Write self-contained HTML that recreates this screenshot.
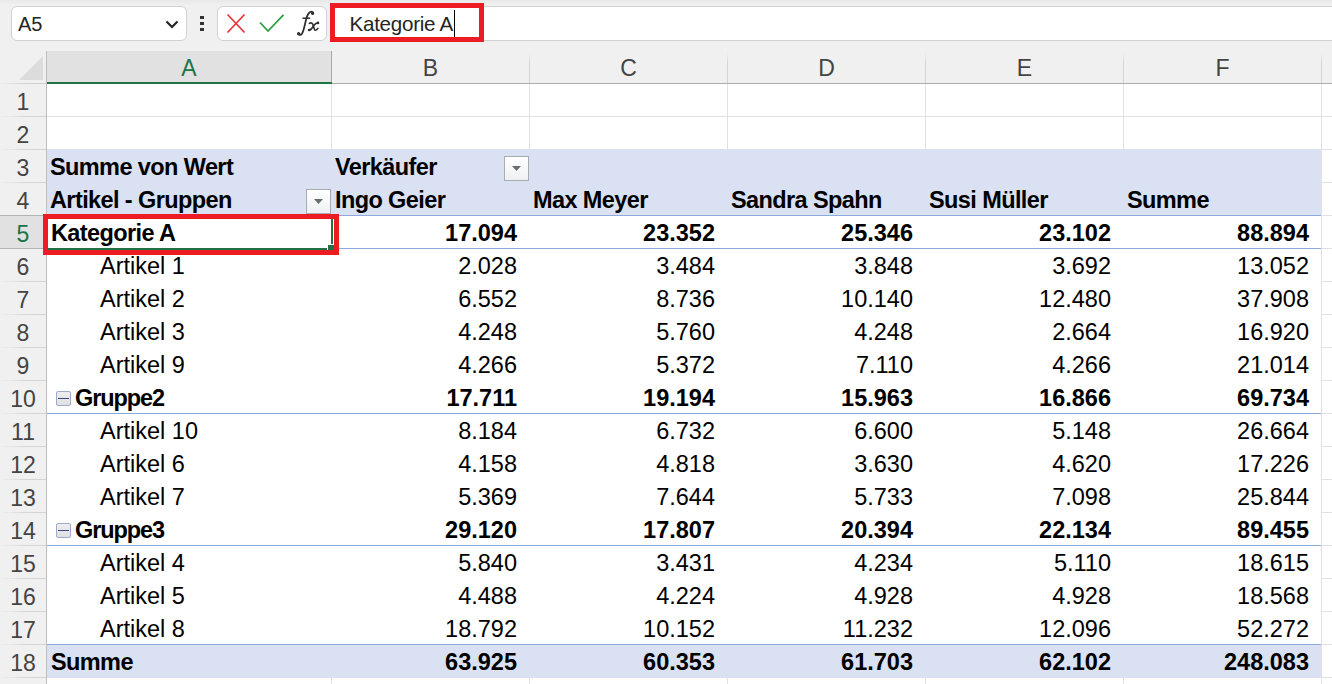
<!DOCTYPE html>
<html><head><meta charset="utf-8"><style>
html,body{margin:0;padding:0;}
body{width:1332px;height:684px;position:relative;overflow:hidden;background:linear-gradient(#e9e9e9,#f0f0f0 5px) #f0f0f0;font-family:"Liberation Sans", sans-serif;}
.t{position:absolute;white-space:nowrap;font-size:22px;line-height:22px;color:#000;}
</style></head><body>
<div id="nb" style="position:absolute;left:11px;top:6px;width:174px;height:33px;border:1px solid #d1d1d1;border-radius:6px;background:#fff"></div>
<div class="t" style="left:18px;top:14px;font-size:20px;line-height:20px;color:#242424">A5</div>
<svg style="position:absolute;left:164px;top:18px" width="16" height="12"><polyline points="2.5,3.5 8,9 13.5,3.5" fill="none" stroke="#242424" stroke-width="2.2"/></svg>
<div style="position:absolute;left:200.3px;top:16px;width:3.6px;height:3px;background:#333"></div>
<div style="position:absolute;left:200.3px;top:22px;width:3.6px;height:3px;background:#333"></div>
<div style="position:absolute;left:200.3px;top:28px;width:3.6px;height:3px;background:#333"></div>
<div style="position:absolute;left:217px;top:6px;width:108px;height:33px;border:1px solid #d1d1d1;border-radius:6px;background:#fff"></div>
<svg style="position:absolute;left:220px;top:8px" width="100" height="32"><path d="M7.5 6.5 L24.5 24.5 M24.5 6.5 L7.5 24.5" stroke="#e8373f" stroke-width="1.8" fill="none"/><polyline points="40,14.5 48,23 63.5,6.8" stroke="#2ea043" stroke-width="1.8" fill="none"/></svg>
<svg style="position:absolute;left:290px;top:5px" width="36" height="36"><path d="M8.4 28.8 C9.2 30.3 10.8 30.2 12 28.6 C13.4 26.6 14.6 21 15.6 16.5 C16.6 11.8 18.2 6.8 21.4 6.6 C22.6 6.6 23.2 7.4 23.1 8.2" fill="none" stroke="#2e2e2e" stroke-width="1.8" stroke-linecap="round"/><circle cx="8.6" cy="28.6" r="1.6" fill="#2e2e2e"/><circle cx="22.6" cy="8.5" r="1.6" fill="#2e2e2e"/><path d="M12.5 13.2 L20.2 13.2" stroke="#2e2e2e" stroke-width="1.5"/><path d="M19.4 18.3 C20.8 17.4 22.3 17.8 22.9 19.6 L24.4 24.2 C24.9 25.6 26.2 25.8 27.9 23.4" fill="none" stroke="#2e2e2e" stroke-width="1.6" stroke-linecap="round"/><path d="M28.2 17.9 C26.4 17.6 25 18.6 23.4 21 C21.8 23.6 20.4 25.6 19 25.1" fill="none" stroke="#2e2e2e" stroke-width="1.6" stroke-linecap="round"/><circle cx="28" cy="17.9" r="1.3" fill="#2e2e2e"/><circle cx="19.1" cy="25" r="1.3" fill="#2e2e2e"/></svg>
<div style="position:absolute;left:331px;top:6px;width:1010px;height:33px;border:1px solid #d1d1d1;border-radius:6px 0 0 6px;background:#fff"></div>
<div class="t" style="left:349.5px;top:13.5px;font-size:20.6px;line-height:20.6px;letter-spacing:-0.27px;color:#242424">Kategorie A</div>
<div style="position:absolute;left:454px;top:10px;width:1px;height:27px;background:#000"></div>
<div style="position:absolute;left:330px;top:3px;width:144px;height:29px;border:5px solid #ed1c24"></div>
<svg style="position:absolute;left:0;top:51px" width="46" height="33"><polygon points="43,5 43,29 19,29" fill="#dcdcdc"/></svg>
<div style="position:absolute;left:46px;top:51px;width:1286px;height:32px;background:#f0f0f0"></div>
<div style="position:absolute;left:47px;top:51px;width:284px;height:31px;background:#e1e1e1"></div>
<div style="position:absolute;left:46px;top:83px;width:1286px;height:1px;background:#adadad"></div>
<div style="position:absolute;left:331px;top:51px;width:1px;height:32px;background:#a8a8a8"></div>
<div style="position:absolute;left:47px;top:82px;width:285px;height:2px;background:#217346"></div>
<div style="position:absolute;left:529px;top:52px;width:1px;height:31px;background:linear-gradient(#f0f0f0,#d4d4d4 40%)"></div>
<div style="position:absolute;left:727px;top:52px;width:1px;height:31px;background:linear-gradient(#f0f0f0,#d4d4d4 40%)"></div>
<div style="position:absolute;left:925px;top:52px;width:1px;height:31px;background:linear-gradient(#f0f0f0,#d4d4d4 40%)"></div>
<div style="position:absolute;left:1123px;top:52px;width:1px;height:31px;background:linear-gradient(#f0f0f0,#d4d4d4 40%)"></div>
<div style="position:absolute;left:1321px;top:52px;width:1px;height:31px;background:linear-gradient(#f0f0f0,#d4d4d4 40%)"></div>
<div class="t" style="left:47px;width:284px;top:57.3px;text-align:center;font-size:23px;line-height:23px;color:#217346">A</div>
<div class="t" style="left:332px;width:197px;top:57.3px;text-align:center;font-size:23px;line-height:23px;color:#444">B</div>
<div class="t" style="left:530px;width:197px;top:57.3px;text-align:center;font-size:23px;line-height:23px;color:#444">C</div>
<div class="t" style="left:728px;width:197px;top:57.3px;text-align:center;font-size:23px;line-height:23px;color:#444">D</div>
<div class="t" style="left:926px;width:197px;top:57.3px;text-align:center;font-size:23px;line-height:23px;color:#444">E</div>
<div class="t" style="left:1124px;width:197px;top:57.3px;text-align:center;font-size:23px;line-height:23px;color:#444">F</div>
<div class="t" style="left:1322px;width:198px;top:57.3px;text-align:center;font-size:23px;line-height:23px;color:#444">G</div>
<div style="position:absolute;left:46px;top:51px;width:1px;height:640px;background:#bdbdbd"></div>
<div style="position:absolute;left:0;top:83px;width:46px;height:1px;background:linear-gradient(to right,#f0f0f0,#cfcfcf 60%)"></div>
<div style="position:absolute;left:0;top:116px;width:46px;height:1px;background:linear-gradient(to right,#f0f0f0,#d4d4d4 60%)"></div>
<div class="t" style="left:0;width:46px;top:90.6px;text-align:center;font-size:23px;line-height:23px;color:#444">1</div>
<div style="position:absolute;left:0;top:149px;width:46px;height:1px;background:linear-gradient(to right,#f0f0f0,#d4d4d4 60%)"></div>
<div class="t" style="left:0;width:46px;top:123.6px;text-align:center;font-size:23px;line-height:23px;color:#444">2</div>
<div style="position:absolute;left:0;top:182px;width:46px;height:1px;background:linear-gradient(to right,#f0f0f0,#d4d4d4 60%)"></div>
<div class="t" style="left:0;width:46px;top:156.6px;text-align:center;font-size:23px;line-height:23px;color:#444">3</div>
<div style="position:absolute;left:0;top:215px;width:46px;height:1px;background:linear-gradient(to right,#f0f0f0,#d4d4d4 60%)"></div>
<div class="t" style="left:0;width:46px;top:189.6px;text-align:center;font-size:23px;line-height:23px;color:#444">4</div>
<div style="position:absolute;left:0;top:216px;width:46px;height:32px;background:#e1e1e1"></div>
<div style="position:absolute;left:0;top:248px;width:46px;height:1px;background:linear-gradient(to right,#f0f0f0,#d4d4d4 60%)"></div>
<div class="t" style="left:0;width:46px;top:222.6px;text-align:center;font-size:23px;line-height:23px;color:#217346">5</div>
<div style="position:absolute;left:0;top:281px;width:46px;height:1px;background:linear-gradient(to right,#f0f0f0,#d4d4d4 60%)"></div>
<div class="t" style="left:0;width:46px;top:255.6px;text-align:center;font-size:23px;line-height:23px;color:#444">6</div>
<div style="position:absolute;left:0;top:314px;width:46px;height:1px;background:linear-gradient(to right,#f0f0f0,#d4d4d4 60%)"></div>
<div class="t" style="left:0;width:46px;top:288.6px;text-align:center;font-size:23px;line-height:23px;color:#444">7</div>
<div style="position:absolute;left:0;top:347px;width:46px;height:1px;background:linear-gradient(to right,#f0f0f0,#d4d4d4 60%)"></div>
<div class="t" style="left:0;width:46px;top:321.6px;text-align:center;font-size:23px;line-height:23px;color:#444">8</div>
<div style="position:absolute;left:0;top:380px;width:46px;height:1px;background:linear-gradient(to right,#f0f0f0,#d4d4d4 60%)"></div>
<div class="t" style="left:0;width:46px;top:354.6px;text-align:center;font-size:23px;line-height:23px;color:#444">9</div>
<div style="position:absolute;left:0;top:413px;width:46px;height:1px;background:linear-gradient(to right,#f0f0f0,#d4d4d4 60%)"></div>
<div class="t" style="left:0;width:46px;top:387.6px;text-align:center;font-size:23px;line-height:23px;color:#444">10</div>
<div style="position:absolute;left:0;top:446px;width:46px;height:1px;background:linear-gradient(to right,#f0f0f0,#d4d4d4 60%)"></div>
<div class="t" style="left:0;width:46px;top:420.6px;text-align:center;font-size:23px;line-height:23px;color:#444">11</div>
<div style="position:absolute;left:0;top:479px;width:46px;height:1px;background:linear-gradient(to right,#f0f0f0,#d4d4d4 60%)"></div>
<div class="t" style="left:0;width:46px;top:453.6px;text-align:center;font-size:23px;line-height:23px;color:#444">12</div>
<div style="position:absolute;left:0;top:512px;width:46px;height:1px;background:linear-gradient(to right,#f0f0f0,#d4d4d4 60%)"></div>
<div class="t" style="left:0;width:46px;top:486.6px;text-align:center;font-size:23px;line-height:23px;color:#444">13</div>
<div style="position:absolute;left:0;top:545px;width:46px;height:1px;background:linear-gradient(to right,#f0f0f0,#d4d4d4 60%)"></div>
<div class="t" style="left:0;width:46px;top:519.6px;text-align:center;font-size:23px;line-height:23px;color:#444">14</div>
<div style="position:absolute;left:0;top:578px;width:46px;height:1px;background:linear-gradient(to right,#f0f0f0,#d4d4d4 60%)"></div>
<div class="t" style="left:0;width:46px;top:552.6px;text-align:center;font-size:23px;line-height:23px;color:#444">15</div>
<div style="position:absolute;left:0;top:611px;width:46px;height:1px;background:linear-gradient(to right,#f0f0f0,#d4d4d4 60%)"></div>
<div class="t" style="left:0;width:46px;top:585.6px;text-align:center;font-size:23px;line-height:23px;color:#444">16</div>
<div style="position:absolute;left:0;top:644px;width:46px;height:1px;background:linear-gradient(to right,#f0f0f0,#d4d4d4 60%)"></div>
<div class="t" style="left:0;width:46px;top:618.6px;text-align:center;font-size:23px;line-height:23px;color:#444">17</div>
<div style="position:absolute;left:0;top:677px;width:46px;height:1px;background:linear-gradient(to right,#f0f0f0,#d4d4d4 60%)"></div>
<div class="t" style="left:0;width:46px;top:651.6px;text-align:center;font-size:23px;line-height:23px;color:#444">18</div>
<div style="position:absolute;left:0;top:710px;width:46px;height:1px;background:linear-gradient(to right,#f0f0f0,#d4d4d4 60%)"></div>
<div class="t" style="left:0;width:46px;top:684.6px;text-align:center;font-size:23px;line-height:23px;color:#444">19</div>
<div style="position:absolute;left:0;top:215px;width:46px;height:1px;background:#b4b4b4"></div>
<div style="position:absolute;left:0;top:248px;width:46px;height:1px;background:#b4b4b4"></div>
<div style="position:absolute;left:47px;top:84px;width:1285px;height:600px;background:#fff"></div>
<div style="position:absolute;left:47px;top:116px;width:1285px;height:1px;background:#e1e1e1"></div>
<div style="position:absolute;left:47px;top:149px;width:1285px;height:1px;background:#e1e1e1"></div>
<div style="position:absolute;left:47px;top:182px;width:1285px;height:1px;background:#e1e1e1"></div>
<div style="position:absolute;left:47px;top:215px;width:1285px;height:1px;background:#e1e1e1"></div>
<div style="position:absolute;left:47px;top:248px;width:1285px;height:1px;background:#e1e1e1"></div>
<div style="position:absolute;left:47px;top:281px;width:1285px;height:1px;background:#e1e1e1"></div>
<div style="position:absolute;left:47px;top:314px;width:1285px;height:1px;background:#e1e1e1"></div>
<div style="position:absolute;left:47px;top:347px;width:1285px;height:1px;background:#e1e1e1"></div>
<div style="position:absolute;left:47px;top:380px;width:1285px;height:1px;background:#e1e1e1"></div>
<div style="position:absolute;left:47px;top:413px;width:1285px;height:1px;background:#e1e1e1"></div>
<div style="position:absolute;left:47px;top:446px;width:1285px;height:1px;background:#e1e1e1"></div>
<div style="position:absolute;left:47px;top:479px;width:1285px;height:1px;background:#e1e1e1"></div>
<div style="position:absolute;left:47px;top:512px;width:1285px;height:1px;background:#e1e1e1"></div>
<div style="position:absolute;left:47px;top:545px;width:1285px;height:1px;background:#e1e1e1"></div>
<div style="position:absolute;left:47px;top:578px;width:1285px;height:1px;background:#e1e1e1"></div>
<div style="position:absolute;left:47px;top:611px;width:1285px;height:1px;background:#e1e1e1"></div>
<div style="position:absolute;left:47px;top:644px;width:1285px;height:1px;background:#e1e1e1"></div>
<div style="position:absolute;left:47px;top:677px;width:1285px;height:1px;background:#e1e1e1"></div>
<div style="position:absolute;left:47px;top:710px;width:1285px;height:1px;background:#e1e1e1"></div>
<div style="position:absolute;left:331px;top:84px;width:1px;height:600px;background:#e1e1e1"></div>
<div style="position:absolute;left:529px;top:84px;width:1px;height:600px;background:#e1e1e1"></div>
<div style="position:absolute;left:727px;top:84px;width:1px;height:600px;background:#e1e1e1"></div>
<div style="position:absolute;left:925px;top:84px;width:1px;height:600px;background:#e1e1e1"></div>
<div style="position:absolute;left:1123px;top:84px;width:1px;height:600px;background:#e1e1e1"></div>
<div style="position:absolute;left:1321px;top:84px;width:1px;height:600px;background:#e1e1e1"></div>
<div style="position:absolute;left:47px;top:150px;width:1274px;height:527px;background:#fff"></div>
<div style="position:absolute;left:47px;top:149px;width:1274px;height:66px;background:#d9e1f2"></div>
<div style="position:absolute;left:47px;top:645px;width:1274px;height:33px;background:#d9e1f2"></div>
<div style="position:absolute;left:47px;top:215px;width:1274px;height:1px;background:#8ea9db"></div>
<div style="position:absolute;left:47px;top:248px;width:1274px;height:1px;background:#8ea9db"></div>
<div style="position:absolute;left:47px;top:413px;width:1274px;height:1px;background:#8ea9db"></div>
<div style="position:absolute;left:47px;top:545px;width:1274px;height:1px;background:#8ea9db"></div>
<div style="position:absolute;left:47px;top:644px;width:1274px;height:1px;background:#8ea9db"></div>
<div class="t" style="left:50px;top:156.10255px;font-weight:bold;font-size:23.5px;line-height:23.5px;letter-spacing:-0.6px;">Summe von Wert</div>
<div class="t" style="left:335px;top:156.10255px;font-weight:bold;font-size:23.5px;line-height:23.5px;letter-spacing:-0.6px;">Verkäufer</div>
<div class="t" style="left:50px;top:189.10255px;font-weight:bold;font-size:23.5px;line-height:23.5px;letter-spacing:-0.6px;">Artikel - Gruppen</div>
<div class="t" style="left:335px;top:189.10255px;font-weight:bold;font-size:23.5px;line-height:23.5px;letter-spacing:-0.6px;">Ingo Geier</div>
<div class="t" style="left:533px;top:189.10255px;font-weight:bold;font-size:23.5px;line-height:23.5px;letter-spacing:-0.6px;">Max Meyer</div>
<div class="t" style="left:731px;top:189.10255px;font-weight:bold;font-size:23.5px;line-height:23.5px;letter-spacing:-0.6px;">Sandra Spahn</div>
<div class="t" style="left:929px;top:189.10255px;font-weight:bold;font-size:23.5px;line-height:23.5px;letter-spacing:-0.6px;">Susi Müller</div>
<div class="t" style="left:1127px;top:189.10255px;font-weight:bold;font-size:23.5px;line-height:23.5px;letter-spacing:-0.6px;">Summe</div>
<div style="position:absolute;left:504px;top:156px;width:23px;height:23px;border:1px solid #a7abb2;background:linear-gradient(#ffffff,#eef0f3)"></div>
<svg style="position:absolute;left:512px;top:166px" width="9" height="6"><polygon points="0,0 9,0 4.5,5" fill="#6d6d6d"/></svg>
<div style="position:absolute;left:306px;top:189px;width:23px;height:23px;border:1px solid #a7abb2;background:linear-gradient(#ffffff,#eef0f3)"></div>
<svg style="position:absolute;left:314px;top:199px" width="9" height="6"><polygon points="0,0 9,0 4.5,5" fill="#6d6d6d"/></svg>
<div class="t" style="left:51px;top:222.10255px;font-weight:bold;font-size:23.5px;line-height:23.5px;letter-spacing:-0.6px;">Kategorie A</div>
<div class="t" style="left:217px;width:300px;text-align:right;top:222.10255px;font-weight:bold;font-size:23.5px;line-height:23.5px;letter-spacing:0px;">17.094</div>
<div class="t" style="left:415px;width:300px;text-align:right;top:222.10255px;font-weight:bold;font-size:23.5px;line-height:23.5px;letter-spacing:0px;">23.352</div>
<div class="t" style="left:613px;width:300px;text-align:right;top:222.10255px;font-weight:bold;font-size:23.5px;line-height:23.5px;letter-spacing:0px;">25.346</div>
<div class="t" style="left:811px;width:300px;text-align:right;top:222.10255px;font-weight:bold;font-size:23.5px;line-height:23.5px;letter-spacing:0px;">23.102</div>
<div class="t" style="left:1009px;width:300px;text-align:right;top:222.10255px;font-weight:bold;font-size:23.5px;line-height:23.5px;letter-spacing:0px;">88.894</div>
<div class="t" style="left:100px;top:255.10255px;font-size:23.5px;line-height:23.5px;letter-spacing:0px;">Artikel 1</div>
<div class="t" style="left:217px;width:300px;text-align:right;top:255.10255px;font-size:23.5px;line-height:23.5px;letter-spacing:0px;">2.028</div>
<div class="t" style="left:415px;width:300px;text-align:right;top:255.10255px;font-size:23.5px;line-height:23.5px;letter-spacing:0px;">3.484</div>
<div class="t" style="left:613px;width:300px;text-align:right;top:255.10255px;font-size:23.5px;line-height:23.5px;letter-spacing:0px;">3.848</div>
<div class="t" style="left:811px;width:300px;text-align:right;top:255.10255px;font-size:23.5px;line-height:23.5px;letter-spacing:0px;">3.692</div>
<div class="t" style="left:1009px;width:300px;text-align:right;top:255.10255px;font-size:23.5px;line-height:23.5px;letter-spacing:0px;">13.052</div>
<div class="t" style="left:100px;top:288.10255px;font-size:23.5px;line-height:23.5px;letter-spacing:0px;">Artikel 2</div>
<div class="t" style="left:217px;width:300px;text-align:right;top:288.10255px;font-size:23.5px;line-height:23.5px;letter-spacing:0px;">6.552</div>
<div class="t" style="left:415px;width:300px;text-align:right;top:288.10255px;font-size:23.5px;line-height:23.5px;letter-spacing:0px;">8.736</div>
<div class="t" style="left:613px;width:300px;text-align:right;top:288.10255px;font-size:23.5px;line-height:23.5px;letter-spacing:0px;">10.140</div>
<div class="t" style="left:811px;width:300px;text-align:right;top:288.10255px;font-size:23.5px;line-height:23.5px;letter-spacing:0px;">12.480</div>
<div class="t" style="left:1009px;width:300px;text-align:right;top:288.10255px;font-size:23.5px;line-height:23.5px;letter-spacing:0px;">37.908</div>
<div class="t" style="left:100px;top:321.10255px;font-size:23.5px;line-height:23.5px;letter-spacing:0px;">Artikel 3</div>
<div class="t" style="left:217px;width:300px;text-align:right;top:321.10255px;font-size:23.5px;line-height:23.5px;letter-spacing:0px;">4.248</div>
<div class="t" style="left:415px;width:300px;text-align:right;top:321.10255px;font-size:23.5px;line-height:23.5px;letter-spacing:0px;">5.760</div>
<div class="t" style="left:613px;width:300px;text-align:right;top:321.10255px;font-size:23.5px;line-height:23.5px;letter-spacing:0px;">4.248</div>
<div class="t" style="left:811px;width:300px;text-align:right;top:321.10255px;font-size:23.5px;line-height:23.5px;letter-spacing:0px;">2.664</div>
<div class="t" style="left:1009px;width:300px;text-align:right;top:321.10255px;font-size:23.5px;line-height:23.5px;letter-spacing:0px;">16.920</div>
<div class="t" style="left:100px;top:354.10255px;font-size:23.5px;line-height:23.5px;letter-spacing:0px;">Artikel 9</div>
<div class="t" style="left:217px;width:300px;text-align:right;top:354.10255px;font-size:23.5px;line-height:23.5px;letter-spacing:0px;">4.266</div>
<div class="t" style="left:415px;width:300px;text-align:right;top:354.10255px;font-size:23.5px;line-height:23.5px;letter-spacing:0px;">5.372</div>
<div class="t" style="left:613px;width:300px;text-align:right;top:354.10255px;font-size:23.5px;line-height:23.5px;letter-spacing:0px;">7.110</div>
<div class="t" style="left:811px;width:300px;text-align:right;top:354.10255px;font-size:23.5px;line-height:23.5px;letter-spacing:0px;">4.266</div>
<div class="t" style="left:1009px;width:300px;text-align:right;top:354.10255px;font-size:23.5px;line-height:23.5px;letter-spacing:0px;">21.014</div>
<div style="position:absolute;left:56px;top:391px;width:13px;height:13px;border:1px solid #9eabc9;border-radius:2px;background:linear-gradient(#eeeeee,#e0e0e0)"></div>
<div style="position:absolute;left:58px;top:398px;width:11px;height:1.3px;background:#3a4780"></div>
<div class="t" style="left:75px;top:387.10255px;font-weight:bold;font-size:23.5px;line-height:23.5px;letter-spacing:-1.1px;">Gruppe2</div>
<div class="t" style="left:217px;width:300px;text-align:right;top:387.10255px;font-weight:bold;font-size:23.5px;line-height:23.5px;letter-spacing:0px;">17.711</div>
<div class="t" style="left:415px;width:300px;text-align:right;top:387.10255px;font-weight:bold;font-size:23.5px;line-height:23.5px;letter-spacing:0px;">19.194</div>
<div class="t" style="left:613px;width:300px;text-align:right;top:387.10255px;font-weight:bold;font-size:23.5px;line-height:23.5px;letter-spacing:0px;">15.963</div>
<div class="t" style="left:811px;width:300px;text-align:right;top:387.10255px;font-weight:bold;font-size:23.5px;line-height:23.5px;letter-spacing:0px;">16.866</div>
<div class="t" style="left:1009px;width:300px;text-align:right;top:387.10255px;font-weight:bold;font-size:23.5px;line-height:23.5px;letter-spacing:0px;">69.734</div>
<div class="t" style="left:100px;top:420.10255px;font-size:23.5px;line-height:23.5px;letter-spacing:0px;">Artikel 10</div>
<div class="t" style="left:217px;width:300px;text-align:right;top:420.10255px;font-size:23.5px;line-height:23.5px;letter-spacing:0px;">8.184</div>
<div class="t" style="left:415px;width:300px;text-align:right;top:420.10255px;font-size:23.5px;line-height:23.5px;letter-spacing:0px;">6.732</div>
<div class="t" style="left:613px;width:300px;text-align:right;top:420.10255px;font-size:23.5px;line-height:23.5px;letter-spacing:0px;">6.600</div>
<div class="t" style="left:811px;width:300px;text-align:right;top:420.10255px;font-size:23.5px;line-height:23.5px;letter-spacing:0px;">5.148</div>
<div class="t" style="left:1009px;width:300px;text-align:right;top:420.10255px;font-size:23.5px;line-height:23.5px;letter-spacing:0px;">26.664</div>
<div class="t" style="left:100px;top:453.10255px;font-size:23.5px;line-height:23.5px;letter-spacing:0px;">Artikel 6</div>
<div class="t" style="left:217px;width:300px;text-align:right;top:453.10255px;font-size:23.5px;line-height:23.5px;letter-spacing:0px;">4.158</div>
<div class="t" style="left:415px;width:300px;text-align:right;top:453.10255px;font-size:23.5px;line-height:23.5px;letter-spacing:0px;">4.818</div>
<div class="t" style="left:613px;width:300px;text-align:right;top:453.10255px;font-size:23.5px;line-height:23.5px;letter-spacing:0px;">3.630</div>
<div class="t" style="left:811px;width:300px;text-align:right;top:453.10255px;font-size:23.5px;line-height:23.5px;letter-spacing:0px;">4.620</div>
<div class="t" style="left:1009px;width:300px;text-align:right;top:453.10255px;font-size:23.5px;line-height:23.5px;letter-spacing:0px;">17.226</div>
<div class="t" style="left:100px;top:486.10255px;font-size:23.5px;line-height:23.5px;letter-spacing:0px;">Artikel 7</div>
<div class="t" style="left:217px;width:300px;text-align:right;top:486.10255px;font-size:23.5px;line-height:23.5px;letter-spacing:0px;">5.369</div>
<div class="t" style="left:415px;width:300px;text-align:right;top:486.10255px;font-size:23.5px;line-height:23.5px;letter-spacing:0px;">7.644</div>
<div class="t" style="left:613px;width:300px;text-align:right;top:486.10255px;font-size:23.5px;line-height:23.5px;letter-spacing:0px;">5.733</div>
<div class="t" style="left:811px;width:300px;text-align:right;top:486.10255px;font-size:23.5px;line-height:23.5px;letter-spacing:0px;">7.098</div>
<div class="t" style="left:1009px;width:300px;text-align:right;top:486.10255px;font-size:23.5px;line-height:23.5px;letter-spacing:0px;">25.844</div>
<div style="position:absolute;left:56px;top:523px;width:13px;height:13px;border:1px solid #9eabc9;border-radius:2px;background:linear-gradient(#eeeeee,#e0e0e0)"></div>
<div style="position:absolute;left:58px;top:530px;width:11px;height:1.3px;background:#3a4780"></div>
<div class="t" style="left:75px;top:519.10255px;font-weight:bold;font-size:23.5px;line-height:23.5px;letter-spacing:-1.1px;">Gruppe3</div>
<div class="t" style="left:217px;width:300px;text-align:right;top:519.10255px;font-weight:bold;font-size:23.5px;line-height:23.5px;letter-spacing:0px;">29.120</div>
<div class="t" style="left:415px;width:300px;text-align:right;top:519.10255px;font-weight:bold;font-size:23.5px;line-height:23.5px;letter-spacing:0px;">17.807</div>
<div class="t" style="left:613px;width:300px;text-align:right;top:519.10255px;font-weight:bold;font-size:23.5px;line-height:23.5px;letter-spacing:0px;">20.394</div>
<div class="t" style="left:811px;width:300px;text-align:right;top:519.10255px;font-weight:bold;font-size:23.5px;line-height:23.5px;letter-spacing:0px;">22.134</div>
<div class="t" style="left:1009px;width:300px;text-align:right;top:519.10255px;font-weight:bold;font-size:23.5px;line-height:23.5px;letter-spacing:0px;">89.455</div>
<div class="t" style="left:100px;top:552.10255px;font-size:23.5px;line-height:23.5px;letter-spacing:0px;">Artikel 4</div>
<div class="t" style="left:217px;width:300px;text-align:right;top:552.10255px;font-size:23.5px;line-height:23.5px;letter-spacing:0px;">5.840</div>
<div class="t" style="left:415px;width:300px;text-align:right;top:552.10255px;font-size:23.5px;line-height:23.5px;letter-spacing:0px;">3.431</div>
<div class="t" style="left:613px;width:300px;text-align:right;top:552.10255px;font-size:23.5px;line-height:23.5px;letter-spacing:0px;">4.234</div>
<div class="t" style="left:811px;width:300px;text-align:right;top:552.10255px;font-size:23.5px;line-height:23.5px;letter-spacing:0px;">5.110</div>
<div class="t" style="left:1009px;width:300px;text-align:right;top:552.10255px;font-size:23.5px;line-height:23.5px;letter-spacing:0px;">18.615</div>
<div class="t" style="left:100px;top:585.10255px;font-size:23.5px;line-height:23.5px;letter-spacing:0px;">Artikel 5</div>
<div class="t" style="left:217px;width:300px;text-align:right;top:585.10255px;font-size:23.5px;line-height:23.5px;letter-spacing:0px;">4.488</div>
<div class="t" style="left:415px;width:300px;text-align:right;top:585.10255px;font-size:23.5px;line-height:23.5px;letter-spacing:0px;">4.224</div>
<div class="t" style="left:613px;width:300px;text-align:right;top:585.10255px;font-size:23.5px;line-height:23.5px;letter-spacing:0px;">4.928</div>
<div class="t" style="left:811px;width:300px;text-align:right;top:585.10255px;font-size:23.5px;line-height:23.5px;letter-spacing:0px;">4.928</div>
<div class="t" style="left:1009px;width:300px;text-align:right;top:585.10255px;font-size:23.5px;line-height:23.5px;letter-spacing:0px;">18.568</div>
<div class="t" style="left:100px;top:618.10255px;font-size:23.5px;line-height:23.5px;letter-spacing:0px;">Artikel 8</div>
<div class="t" style="left:217px;width:300px;text-align:right;top:618.10255px;font-size:23.5px;line-height:23.5px;letter-spacing:0px;">18.792</div>
<div class="t" style="left:415px;width:300px;text-align:right;top:618.10255px;font-size:23.5px;line-height:23.5px;letter-spacing:0px;">10.152</div>
<div class="t" style="left:613px;width:300px;text-align:right;top:618.10255px;font-size:23.5px;line-height:23.5px;letter-spacing:0px;">11.232</div>
<div class="t" style="left:811px;width:300px;text-align:right;top:618.10255px;font-size:23.5px;line-height:23.5px;letter-spacing:0px;">12.096</div>
<div class="t" style="left:1009px;width:300px;text-align:right;top:618.10255px;font-size:23.5px;line-height:23.5px;letter-spacing:0px;">52.272</div>
<div class="t" style="left:51px;top:651.10255px;font-weight:bold;font-size:23.5px;line-height:23.5px;letter-spacing:-0.6px;">Summe</div>
<div class="t" style="left:217px;width:300px;text-align:right;top:651.10255px;font-weight:bold;font-size:23.5px;line-height:23.5px;letter-spacing:0px;">63.925</div>
<div class="t" style="left:415px;width:300px;text-align:right;top:651.10255px;font-weight:bold;font-size:23.5px;line-height:23.5px;letter-spacing:0px;">60.353</div>
<div class="t" style="left:613px;width:300px;text-align:right;top:651.10255px;font-weight:bold;font-size:23.5px;line-height:23.5px;letter-spacing:0px;">61.703</div>
<div class="t" style="left:811px;width:300px;text-align:right;top:651.10255px;font-weight:bold;font-size:23.5px;line-height:23.5px;letter-spacing:0px;">62.102</div>
<div class="t" style="left:1009px;width:300px;text-align:right;top:651.10255px;font-weight:bold;font-size:23.5px;line-height:23.5px;letter-spacing:0px;">248.083</div>
<div style="position:absolute;left:46px;top:215px;width:283px;height:31px;border:2px solid #217346"></div>
<div style="position:absolute;left:327px;top:244px;width:6px;height:6px;background:#217346;border:1px solid #fff"></div>
<div style="position:absolute;left:43px;top:214px;width:286px;height:31px;border:5px solid #ed1c24"></div>
</body></html>
